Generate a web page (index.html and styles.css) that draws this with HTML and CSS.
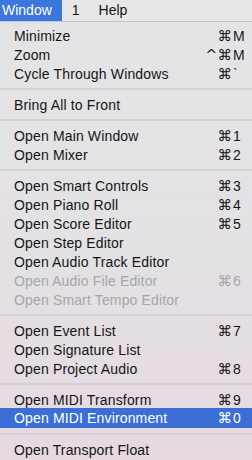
FILE: index.html
```html
<!DOCTYPE html>
<html>
<head>
<meta charset="utf-8">
<link rel="stylesheet" href="styles.css">
</head>
<body>
<div class="menubar">
  <span class="mb-item active">Window</span>
  <span class="mb-item">1</span>
  <span class="mb-item">Help</span>
</div>
<div class="menu">
  <div class="item"><span class="label">Minimize</span><span class="mod">⌘</span><span class="key">M</span></div>
  <div class="item"><span class="label">Zoom</span><span class="mod">^⌘</span><span class="key">M</span></div>
  <div class="item"><span class="label">Cycle Through Windows</span><span class="mod">⌘</span><span class="key">`</span></div>
  <div class="sep"></div>
  <div class="item"><span class="label">Bring All to Front</span></div>
  <div class="sep"></div>
  <div class="item"><span class="label">Open Main Window</span><span class="mod">⌘</span><span class="key">1</span></div>
  <div class="item"><span class="label">Open Mixer</span><span class="mod">⌘</span><span class="key">2</span></div>
  <div class="sep"></div>
  <div class="item"><span class="label">Open Smart Controls</span><span class="mod">⌘</span><span class="key">3</span></div>
  <div class="item"><span class="label">Open Piano Roll</span><span class="mod">⌘</span><span class="key">4</span></div>
  <div class="item"><span class="label">Open Score Editor</span><span class="mod">⌘</span><span class="key">5</span></div>
  <div class="item"><span class="label">Open Step Editor</span></div>
  <div class="item"><span class="label">Open Audio Track Editor</span></div>
  <div class="item disabled"><span class="label">Open Audio File Editor</span><span class="mod">⌘</span><span class="key">6</span></div>
  <div class="item disabled"><span class="label">Open Smart Tempo Editor</span></div>
  <div class="sep"></div>
  <div class="item"><span class="label">Open Event List</span><span class="mod">⌘</span><span class="key">7</span></div>
  <div class="item"><span class="label">Open Signature List</span></div>
  <div class="item"><span class="label">Open Project Audio</span><span class="mod">⌘</span><span class="key">8</span></div>
  <div class="sep"></div>
  <div class="item"><span class="label">Open MIDI Transform</span><span class="mod">⌘</span><span class="key">9</span></div>
  <div class="item selected"><span class="label">Open MIDI Environment</span><span class="mod">⌘</span><span class="key">0</span></div>
  <div class="sep"></div>
  <div class="item"><span class="label">Open Transport Float</span></div>
</div>
</body>
</html>
```
FILE: styles.css
```css
html, body {
  margin: 0;
  padding: 0;
}
body {
  width: 252px;
  height: 460px;
  overflow: hidden;
  font-family: "Liberation Sans", "DejaVu Sans", sans-serif;
  font-size: 14px;
  color: #151515;
  background: linear-gradient(to bottom, #e4e4e6 0%, #e3e1e4 55%, #e6d9e2 100%);
}
.menubar {
  display: flex;
  height: 21px;
  border-bottom: 1px solid #c6c6c8;
  background: #e7e7e8;
  line-height: 21px;
}
.mb-item {
  padding: 0 10px;
}
.mb-item.active {
  background: #3b75de;
  color: #fff;
  padding: 0 10px 0 2px;
}
.mb-item:nth-child(2) {
  padding: 0 9px 0 10px;
}
.menu {
  padding-top: 4px;
}
.item {
  display: flex;
  align-items: center;
  height: 19px;
  padding: 0 7px 0 14px;
  letter-spacing: 0.15px;
}
.label {
  flex: 1;
  white-space: nowrap;
}
.mod {
  font-family: "DejaVu Sans", sans-serif;
  font-size: 14.5px;
  text-align: right;
  letter-spacing: 0;
}
.key {
  width: 12px;
  margin-left: 1px;
}
.disabled {
  color: #a6a6a8;
}
.selected {
  background: #3c6fd6;
  color: #fff;
  height: 20px;
  margin-top: -1px;
}
.sep {
  height: 12px;
  display: flex;
  align-items: center;
}
.sep::after {
  content: "";
  display: block;
  width: 100%;
  height: 2px;
  background: #d2d1d4;
}
```
